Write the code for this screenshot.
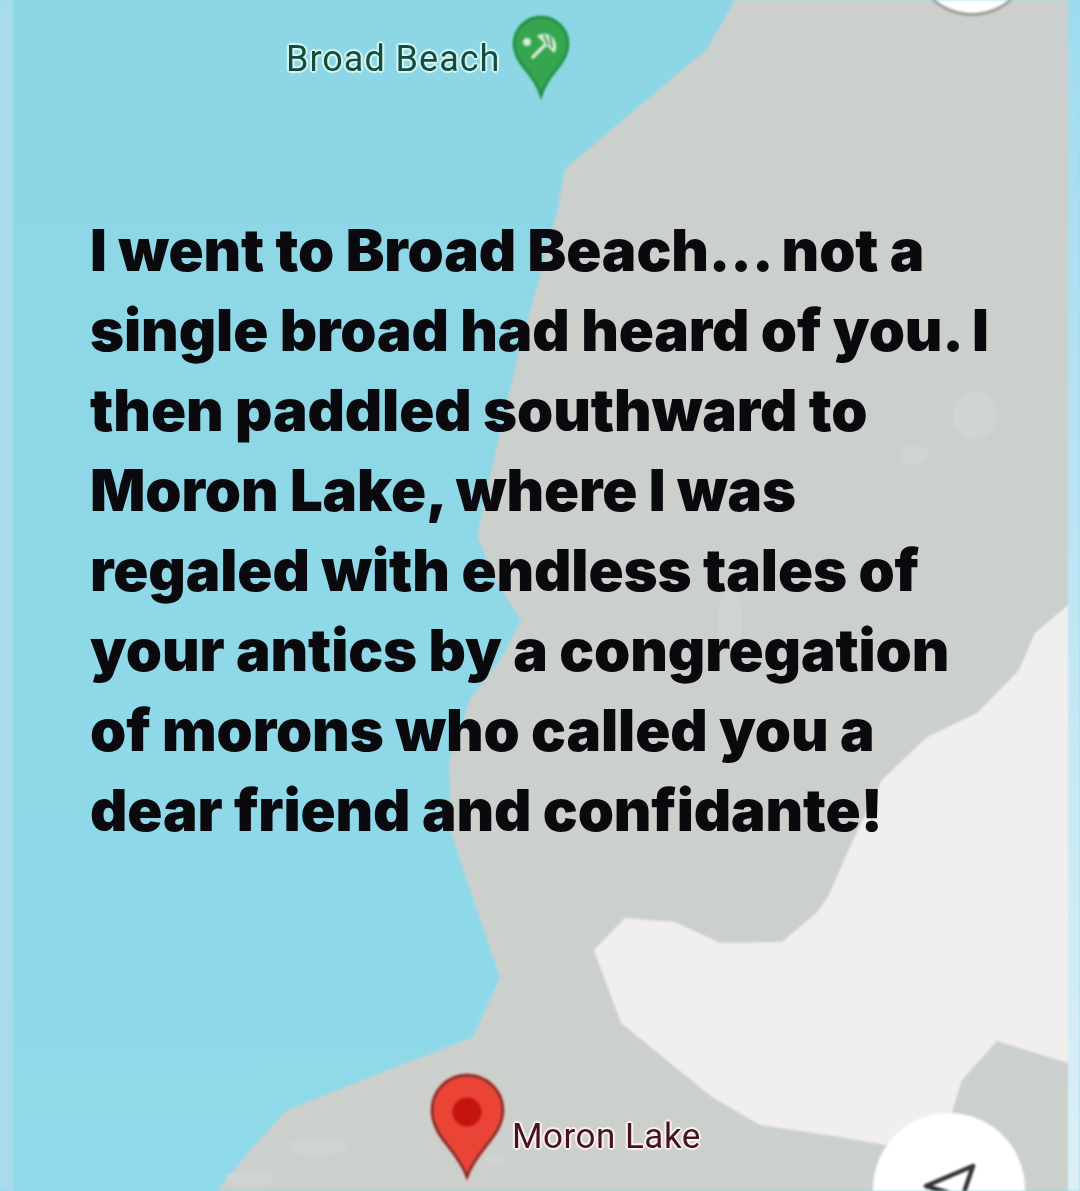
const GREEN_PIN = "M541 17 C556 17 568 29 568 44 C568 54 563 62 556 70 C550 77 544 86 541 96 C538 86 532 77 526 70 C519 62 514 54 514 44 C514 29 526 17 541 17 Z";
const RED_PIN = "M467 1075 C487 1075 503 1091 503 1110 C503 1124 495 1135 486 1146 C479 1155 471 1165 467 1177 C463 1165 455 1155 448 1146 C439 1135 432 1124 432 1110 C432 1091 447 1075 467 1075 Z";

export default function App() {
  return (
    <div className="relative w-[1080px] h-[1191px] overflow-hidden bg-[#8fd9ea]">
      <svg className="absolute inset-0 blur-[0.8px]" width="1080" height="1191" viewBox="0 0 1080 1191">
        <defs>
          <linearGradient id="side" x1="0" y1="0" x2="0" y2="1">
            <stop offset="0" stopColor="#9fdbf0" />
            <stop offset="0.5" stopColor="#bfe6f4" />
            <stop offset="1" stopColor="#dceff8" />
          </linearGradient>
          <linearGradient id="water" x1="0" y1="0" x2="0" y2="1">
            <stop offset="0" stopColor="#8dd6e6" />
            <stop offset="1" stopColor="#8fdaea" />
          </linearGradient>
        </defs>
        <rect x="0" y="0" width="1080" height="1191" fill="url(#water)" />
        <path
          d="M735 0 L707 49 L630 114 L565 169 L557 212 L537 286 L517 359 L500 433 L477 535 L495 580 L521 620 L500 660 L471 697 L449 760 L451 833 L475 905 L500 977 L473 1037 L380 1073 L287 1110 L250 1150 L217 1191 L1068 1191 L1068 0 Z"
          fill="#cbd0cc"
        />
        <path
          d="M1068 605 L1035 633 L1019 670 L977 713 L927 737 L882 780 L853 840 L828 897 L816 913 L782 942 L720 943 L675 922 L625 918 L594 950 L621 1023 L712 1097 L760 1125 L840 1137 L885 1145 L945 1125 L952 1112 L962 1080 L997 1041 L1068 1063 Z"
          fill="#f1efed"
        />
        <g fill="#d1d5d1">
          <ellipse cx="318" cy="1147" rx="30" ry="9" />
          <ellipse cx="250" cy="1178" rx="24" ry="8" />
          <ellipse cx="495" cy="1160" rx="10" ry="6" />
          <ellipse cx="975" cy="415" rx="22" ry="24" />
          <ellipse cx="915" cy="455" rx="14" ry="10" />
          <ellipse cx="730" cy="620" rx="12" ry="30" />
        </g>
        <rect x="0" y="0" width="13" height="1191" fill="#a8dcec" />
        <rect x="1068" y="0" width="12" height="1191" fill="url(#side)" />
        <circle cx="972" cy="-43" r="59" fill="#9a9c9a" />
        <circle cx="972" cy="-45" r="58" fill="#ffffff" />
        <circle cx="949" cy="1189" r="76" fill="#ffffff" />
        <path d="M973 1166 L926 1186 L949 1193 L958 1210 Z" fill="none" stroke="#333333" strokeWidth="4.5" strokeLinejoin="round" />

        <path d={GREEN_PIN} fill="none" stroke="#7fdcc8" strokeWidth="5" />
        <path d={GREEN_PIN} fill="#35a54e" stroke="#1f8a4a" strokeWidth="2.5" />
        <circle cx="527" cy="42" r="4" fill="#d7eed9" />
        <path d="M533 57 L548 42" stroke="#d7eed9" strokeWidth="3.6" strokeLinecap="round" />
        <path d="M537 36 C543 32 551 34 554 39 C557 44 557 50 554 53 L537 36 Z" fill="#d7eed9" />
        <path d="M544 35 L548 45 M550 36 L552 48" stroke="#2f8f55" strokeWidth="1.8" />

        <path d={RED_PIN} fill="none" stroke="#f7b5ae" strokeWidth="5" />
        <path d={RED_PIN} fill="#ea4436" stroke="#6f2a2a" strokeWidth="2.4" />
        <circle cx="467" cy="1112" r="14.5" fill="#c4140f" />
      </svg>

      <div className="absolute left-[286px] top-[37px] font-['Roboto',sans-serif] text-[36px] leading-[44px] tracking-[1px] text-[#164c40] blur-[0.4px] [text-shadow:2px_0_1px_#d4f8f2,-2px_0_1px_#d4f8f2,0_2px_1px_#d4f8f2,0_-2px_1px_#d4f8f2,1px_1px_1px_#d4f8f2,-1px_-1px_1px_#d4f8f2,1px_-1px_1px_#d4f8f2,-1px_1px_1px_#d4f8f2]">
        Broad Beach
      </div>
      <div className="absolute left-[512px] top-[1116px] font-['Roboto',sans-serif] text-[35px] leading-[42px] tracking-[0.5px] text-[#431520] blur-[0.4px] [text-shadow:2px_0_1px_#fff1f1,-2px_0_1px_#fff1f1,0_2px_1px_#fff1f1,0_-2px_1px_#fff1f1,1px_1px_1px_#fff1f1,-1px_-1px_1px_#fff1f1,1px_-1px_1px_#fff1f1,-1px_1px_1px_#fff1f1]">
        Moron Lake
      </div>

      <div className="relative pt-[210px] pl-[90px] font-['Inter',sans-serif] font-black text-[58px] leading-[80px] tracking-[-0.1px] text-[#0a0a0e] whitespace-nowrap blur-[0.4px]">
        <p>I went to Broad Beach... not a</p>
        <p>single broad had heard of you. I</p>
        <p>then paddled southward to</p>
        <p>Moron Lake, where I was</p>
        <p>regaled with endless tales of</p>
        <p>your antics by a congregation</p>
        <p>of morons who called you a</p>
        <p>dear friend and confidante!</p>
      </div>
    </div>
  );
}
